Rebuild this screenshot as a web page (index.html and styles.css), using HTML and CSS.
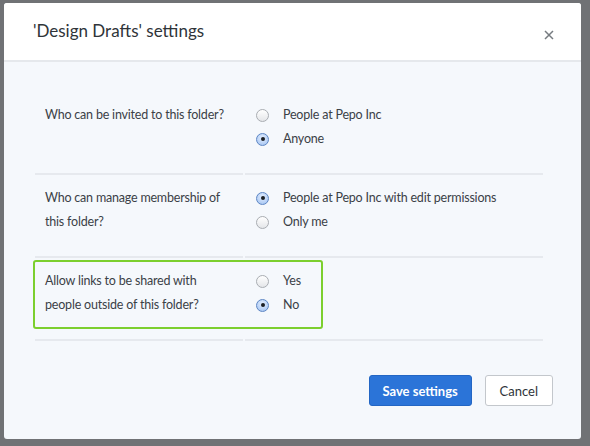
FILE: index.html
```html
<!DOCTYPE html>
<html>
<head>
<meta charset="utf-8">
<link rel="stylesheet" href="styles.css">
</head>
<body>
<div class="backdrop">
  <div class="dialog">
    <div class="header">
      <div class="title">'Design Drafts' settings</div>
      <svg class="close" width="10" height="10" viewBox="0 0 10 10"><path d="M1 1L9 9M9 1L1 9" stroke="#767b80" stroke-width="1.5" fill="none"/></svg>
    </div>
    <div class="body">
      <div class="row">
        <div class="question">Who can be invited to this folder?</div>
        <div class="options">
          <div class="opt"><span class="radio"></span>People at Pepo Inc</div>
          <div class="opt"><span class="radio checked"></span>Anyone</div>
        </div>
      </div>
      <div class="row">
        <div class="question">Who can manage membership of this folder?</div>
        <div class="options">
          <div class="opt"><span class="radio checked"></span>People at Pepo Inc with edit permissions</div>
          <div class="opt"><span class="radio"></span>Only me</div>
        </div>
      </div>
      <div class="row highlight">
        <div class="question">Allow links to be shared with people outside of this folder?</div>
        <div class="options">
          <div class="opt"><span class="radio"></span>Yes</div>
          <div class="opt"><span class="radio checked"></span>No</div>
        </div>
      </div>
      <div class="footer">
        <button class="btn primary">Save settings</button>
        <button class="btn">Cancel</button>
      </div>
    </div>
  </div>
</div>
</body>
</html>
```
FILE: styles.css
```css
html, body {
  margin: 0;
  padding: 0;
}
body {
  width: 590px;
  height: 446px;
  overflow: hidden;
  background: #707275;
  font-family: Lato, "Open Sans", "Liberation Sans", sans-serif;
  color: #3b4147;
}
.backdrop {
  padding: 3px 9px 0 4px;
}
.dialog {
  width: 577px;
  height: 436px;
  border-radius: 3px;
  overflow: hidden;
  background: #f5f8fc;
  display: flex;
  flex-direction: column;
}
.header {
  height: 57px;
  background: #fff;
  border-bottom: 2px solid #e5e8ec;
  display: flex;
  align-items: center;
  justify-content: space-between;
  padding: 0 27px 0 29px;
  flex-shrink: 0;
}
.title {
  font-size: 17px;
  color: #2f3439;
  margin-top: -3px;
}
.close {
  display: block;
  margin-top: 6px;
}
.body {
  padding: 30px 38px 0 31px;
  display: flex;
  flex-direction: column;
}
.row {
  display: flex;
  font-size: 12.5px;
  letter-spacing: -0.2px;
  line-height: 24px;
}
.question {
  width: 190px;
  padding: 11px 8px 22px 10px;
  border-bottom: 2px solid #e6e9ee;
  margin-right: 2px;
}
.options {
  flex: 1;
  padding: 11px 0 22px 11px;
  border-bottom: 2px solid #e6e9ee;
}
.row.highlight {
  position: relative;
}
.row.highlight::before {
  content: "";
  position: absolute;
  left: -2px;
  top: 2px;
  width: 286px;
  height: 65px;
  border: 2px solid #7ccf2e;
  border-radius: 3px;
  pointer-events: none;
}
.opt {
  display: flex;
  align-items: center;
}
.radio {
  width: 11px;
  height: 11px;
  border-radius: 50%;
  border: 1px solid #a9adb2;
  background: linear-gradient(#ffffff, #e4e6e9);
  margin-right: 14px;
  box-sizing: content-box;
  flex-shrink: 0;
  display: flex;
  align-items: center;
  justify-content: center;
}
.radio.checked {
  border-color: #5d86c4;
  background: radial-gradient(circle at 50% 35%, #e4efff, #9dbff0);
}
.radio.checked::after {
  content: "";
  width: 4px;
  height: 4px;
  border-radius: 50%;
  background: #1b1f24;
}
.footer {
  display: flex;
  justify-content: flex-end;
  gap: 13px;
  padding-top: 34px;
  margin-right: -10px;
}
.btn {
  height: 31px;
  font-family: Lato, "Open Sans", "Liberation Sans", sans-serif;
  font-size: 13px;
  border-radius: 3px;
  border: 1px solid #c3c7cc;
  background: #fff;
  color: #2f3439;
  padding: 0 14px;
  white-space: nowrap;
  cursor: pointer;
}
.btn.primary {
  background: #2b74d8;
  border-color: #2366c4;
  color: #fff;
  font-weight: bold;
  padding: 0;
  width: 103px;
}
```
